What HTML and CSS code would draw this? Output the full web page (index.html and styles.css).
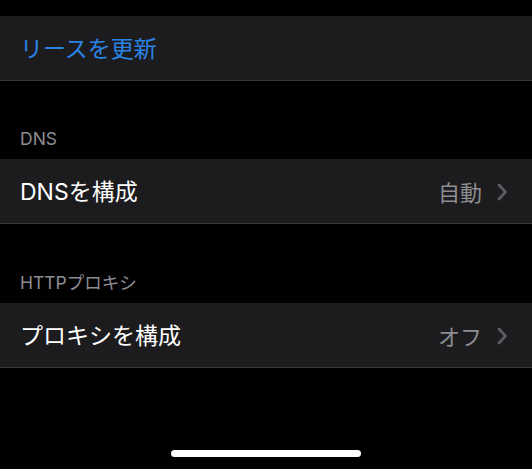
FILE: index.html
```html
<!DOCTYPE html>
<html lang="ja">
<head>
<meta charset="utf-8">
<title>Wi-Fi</title>
<link rel="stylesheet" href="styles.css">
</head>
<body>
<div class="screen">
  <div class="top-gap"></div>
  <div class="group">
    <div class="row">
      <span class="label link">リースを更新</span>
    </div>
  </div>

  <div class="section-header">DNS</div>
  <div class="group">
    <div class="row">
      <span class="label">DNSを構成</span>
      <span class="accessory">
        <span class="value">自動</span>
        <svg class="chevron" width="11" height="18" viewBox="0 0 11 18"><path d="M2 2 L8.5 9 L2 16" fill="none" stroke="#5b5b60" stroke-width="2.8" stroke-linecap="round" stroke-linejoin="round"/></svg>
      </span>
    </div>
  </div>

  <div class="section-header tall">HTTPプロキシ</div>
  <div class="group">
    <div class="row">
      <span class="label">プロキシを構成</span>
      <span class="accessory">
        <span class="value">オフ</span>
        <svg class="chevron" width="11" height="18" viewBox="0 0 11 18"><path d="M2 2 L8.5 9 L2 16" fill="none" stroke="#5b5b60" stroke-width="2.8" stroke-linecap="round" stroke-linejoin="round"/></svg>
      </span>
    </div>
  </div>

  <div class="home-bar"><div class="home-indicator"></div></div>
</div>
</body>
</html>
```

FILE: styles.css
```css
html, body {
  margin: 0;
  padding: 0;
  background: #000;
}

body {
  font-family: Inter, "Noto Sans CJK JP", sans-serif;
  color: #fff;
}

.screen {
  display: flex;
  flex-direction: column;
  min-height: 469px;
  box-sizing: border-box;
}

.top-gap {
  height: 16px;
}

.group {
  background: #1c1c1e;
  border-bottom: 1px solid #38383a;
}

.row {
  height: 64px;
  display: flex;
  align-items: center;
  justify-content: space-between;
  padding: 0 24px 0 20px;
  box-sizing: border-box;
}

.label {
  font-size: 23px;
  line-height: 1;
  padding-top: 3px;
  color: #fff;
}

.label.link {
  color: #2a84e6;
}

.accessory {
  display: flex;
  align-items: center;
  gap: 15px;
}

.value {
  font-size: 22px;
  line-height: 1;
  padding-top: 3px;
  color: #8d8d92;
}

.chevron {
  display: block;
  margin-top: 1px;
}

.section-header {
  height: 78px;
  display: flex;
  align-items: flex-end;
  padding: 0 20px 12px;
  box-sizing: border-box;
  font-size: 17.5px;
  line-height: 1;
  color: #8d8d93;
}

.section-header.tall {
  height: 79px;
}

.home-bar {
  margin-top: auto;
  display: flex;
  justify-content: center;
  padding-bottom: 12px;
}

.home-indicator {
  width: 190px;
  height: 7px;
  border-radius: 4px;
  background: #fff;
}
```
